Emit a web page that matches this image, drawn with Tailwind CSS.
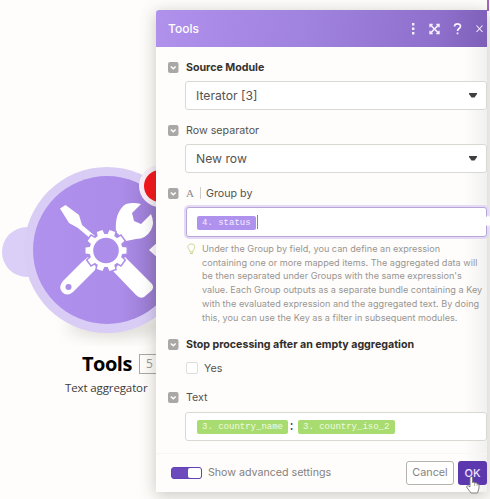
<!DOCTYPE html>
<html lang="en">
<head>
<meta charset="utf-8">
<title>Tools</title>
<script src="https://cdn.jsdelivr.net/npm/@tailwindcss/browser@4"></script>
</head>
<body class="relative w-[490px] h-[499px] overflow-hidden bg-[#fefdfb] font-['Inter','Liberation_Sans',sans-serif] text-[#55534f]">
<svg width="0" height="0" class="absolute">
  <defs>
    <symbol id="chev" viewBox="0 0 11 11"><rect width="10.500" height="11" rx="2" fill="#aaa7a7"/><path d="M2.800 4.500 5.250 6.800 7.700 4.500" fill="none" stroke="#fff" stroke-width="1.500"/></symbol>
  </defs>
</svg>

<!-- module node on the canvas -->
<svg class="absolute left-0 top-0" width="220" height="360" viewBox="0 0 220 360">
  <defs>
    <linearGradient id="node" x1="0" y1="0" x2="1" y2="0"><stop offset="0" stop-color="#b092ee"/><stop offset=".6" stop-color="#ab8de9"/><stop offset=".85" stop-color="#9678cc"/></linearGradient>
    <filter id="soft" x="-50%" y="-50%" width="200%" height="200%"><feGaussianBlur stdDeviation="8"/></filter>
    <path id="tooth" d="M-3-20.500H3L3.700-14H-3.700Z"/>
    <g id="gear">
      <circle r="16.500"/>
      <use href="#tooth" transform="rotate(18)"/><use href="#tooth" transform="rotate(54)"/><use href="#tooth" transform="rotate(90)"/><use href="#tooth" transform="rotate(126)"/><use href="#tooth" transform="rotate(162)"/><use href="#tooth" transform="rotate(198)"/><use href="#tooth" transform="rotate(234)"/><use href="#tooth" transform="rotate(270)"/><use href="#tooth" transform="rotate(306)"/><use href="#tooth" transform="rotate(342)"/>
    </g>
  </defs>
  <ellipse cx="115" cy="326" rx="48" ry="10" fill="#d9d7d3" filter="url(#soft)"/>
  <circle cx="27" cy="252" r="25" fill="#dbcff7"/>
  <circle cx="107" cy="250" r="83" fill="#d9cdf6"/>
  <circle cx="107" cy="250" r="74" fill="url(#node)"/>
  <circle cx="160" cy="186" r="21" fill="#f7effa"/>
  <circle cx="160" cy="186" r="16" fill="#f5161a"/>
  <path d="M149 250 160 240V260Z" fill="#fff"/>
  <g fill="#fff">
    <path d="M60 208.500 65.500 205 79 215 82 225 95 236 91 239 78 228 69 223Z"/>
    <path d="M116 232C115 219 118 209 126 204Q133 202 141 204L132 213 134 221 141 224 151 214Q155 223 151 230 146 239 136 239L126 241Z"/>
    <path d="M82 262 88 257 97 268 73 292Q67 297 62 292 58 287 63 281Z"/>
    <path d="M125 257 152 284Q155 288 150 292L144 297Q140 299 136 295L113 271Z"/>
  </g>
  <use href="#gear" transform="translate(106 250.500)" fill="#ac8ee9" stroke="#ac8ee9" stroke-width="3"/>
  <use href="#gear" transform="translate(106 250.500)" fill="#fff"/>
  <circle cx="106" cy="250.500" r="12.800" fill="#ad8eea"/>
  <circle cx="68.500" cy="287" r="3" fill="#ad8eea"/>
</svg>
<div class="absolute left-[82px] top-[352px] flex items-center gap-[7px] font-['Open_Sans',sans-serif]">
  <span class="text-[20px] leading-6 font-bold text-black tracking-[-0.5px]">Tools</span>
  <span class="h-5 w-10 border border-[#aaa8a5] pl-[6px] text-[12px] leading-[18px] text-[#999]">5</span>
</div>
<div class="absolute left-[65px] top-[379px] whitespace-nowrap font-['Open_Sans',sans-serif] text-[11.500px] leading-[17px] tracking-[-0.12px] text-[#3d3b3b]">Text aggregator</div>
<div class="absolute left-[487px] top-0 h-[11px] w-[2px] bg-[#a765bd]"></div>

<!-- settings panel -->
<section class="absolute left-[156px] top-[10px] flex h-[482px] w-[331px] flex-col rounded-t-[3px] bg-[linear-gradient(90deg,#fefdfc_93%,#f1f1ef)] shadow-[0_3px_16px_1px_rgba(60,60,50,0.26)]">
  <header class="flex h-[37px] shrink-0 items-center rounded-tl-[3px] bg-[linear-gradient(100deg,#b092ed_0%,#a082df_45%,#8e70cc_85%,#7d5fb8_100%)] pl-3 pr-[2px] text-white">
    <span class="flex-1 text-[12px] leading-4 font-medium">Tools</span>
    <svg width="76" height="16" viewBox="0 0 76 16" fill="none" stroke="#f6f0ff">
      <path d="M3 3.200h2.400M3 7.700h2.400M3 12.200h2.400" stroke-width="2.400"/>
      <path d="M21 6.200V3.500H23.700M27.300 3.500H30V6.200M30 9.800V12.500H27.300M23.700 12.500H21V9.800" stroke-width="1.400"/>
      <path d="M21.500 4 29.500 12M29.500 4 21.500 12" stroke-width="1.700"/>
      <path d="M45.500 5.500C45.500 2 51.500 2 51.500 5.300C51.500 7.500 48.500 7.500 48.500 10M48.500 11.500v1.700" stroke-width="1.700"/>
      <path d="M67.500 4.500 73.500 11M73.500 4.500 67.500 11" stroke-width="1.100"/>
    </svg>
  </header>
  <div class="flex flex-col pl-3 text-[10.700px] leading-4">
    <div class="mt-3 flex items-center gap-[7px]"><svg width="11" height="11"><use href="#chev"/></svg><b class="pt-[2px] leading-[14px] font-bold text-[10.650px] text-[#35332f]">Source Module</b></div>
    <div class="mt-[6px] ml-[17px] flex h-[29px] items-center justify-between rounded-[3px] border border-[#d9d9d4] bg-white pl-[10px] pr-[9px] text-[12.200px]"><span>Iterator [3]</span><svg width="8" height="5"><path d="M0 0H8V1L5.500 4.500H2.500L0 1Z" fill="#403e3e"/></svg></div>
    <div class="mt-[12px] flex items-center gap-[7px]"><svg width="11" height="11"><use href="#chev"/></svg><span class="pt-[2px] leading-[14px]">Row separator</span></div>
    <div class="mt-[6px] ml-[17px] flex h-[29px] items-center justify-between rounded-[3px] border border-[#d9d9d4] bg-white pl-[10px] pr-[9px] text-[12.200px]"><span>New row</span><svg width="8" height="5"><path d="M0 0H8V1L5.500 4.500H2.500L0 1Z" fill="#403e3e"/></svg></div>
    <div class="mt-[12px] flex items-center"><svg width="11" height="11"><use href="#chev"/></svg><span class="ml-[7px] w-[14px] font-['Liberation_Serif',serif] text-[11px] text-[#8d8a87]">A</span><i class="h-3 w-px bg-[#cfcdca]"></i><span class="ml-[5px] pt-[2px] leading-[14px]">Group by</span></div>
    <div class="mt-[6px] ml-[18px] flex h-[30px] items-center rounded-[3px] border border-[#b7a7d8] bg-white pl-[10px] shadow-[0_0_0_2px_#e4daf3]"><span class="mt-[2px] flex h-[14px] w-[59px] items-center rounded-[2px] bg-[#af92ee] pl-[5px] font-['Liberation_Mono',monospace] text-[9px] leading-3 text-[#f5edff]">4. status</span><i class="ml-[1px] h-[14px] w-px bg-[#888]"></i></div>
    <div class="mt-[5px] flex pl-[19px]">
      <svg class="mt-[1px] shrink-0" width="9" height="12" fill="none" stroke="#cbd58f"><path d="M3 9V7.500C-.5 5 .5 1 4.500 1S8.500 5 6 7.500V9ZM3 10.500H6"/></svg>
      <p class="ml-[6px] whitespace-nowrap text-[9.130px] leading-[13.700px] text-[#999590]">Under the Group by field, you can define an expression<br>containing one or more mapped items. The aggregated data will<br>be then separated under Groups with the same expression's<br>value. Each Group outputs as a separate bundle containing a Key<br>with the evaluated expression and the aggregated text. By doing<br>this, you can use the Key as a filter in subsequent modules.</p>
    </div>
    <div class="mt-[12px] flex items-center gap-[7px]"><svg width="11" height="11"><use href="#chev"/></svg><b class="pt-[2px] leading-[14px] font-bold text-[10.650px] text-[#302e2b]">Stop processing after an empty aggregation</b></div>
    <div class="mt-[8px] ml-[18px] flex items-center gap-[6px]"><i class="size-3 rounded-[2px] border border-[#dededa] bg-white"></i><span class="pt-[2px] leading-[14px]">Yes</span></div>
    <div class="mt-[13px] flex items-center gap-[7px]"><svg width="11" height="11"><use href="#chev"/></svg><span class="pt-[2px] leading-[14px]">Text</span></div>
    <div class="mt-[7px] ml-[17px] flex h-[29px] items-center rounded-[3px] border border-[#d9d9d4] bg-white pl-[11px] font-['Liberation_Mono',monospace] text-[9px] leading-3 text-[#effbe0]"><span class="flex h-[14px] w-[91px] items-center rounded-[2px] bg-[#a8dc71] pl-[5px]">3. country_name</span><span class="w-[10px] pr-[3px] text-center text-[12px] text-[#444]">:</span><span class="flex h-[14px] w-[97px] items-center rounded-[2px] bg-[#a8dc71] pl-[5px]">3. country_iso_2</span></div>
  </div>
  <footer class="mt-auto flex h-[39px] items-center border-t border-[#fbf5f3] pl-[15px] text-[10.650px]">
    <span class="flex h-3 w-[31px] rounded-[3px] border border-[#6340b3] bg-[#6c49bd]"><i class="ml-auto h-[10px] w-[13px] rounded-[2px] bg-white"></i></span>
    <span class="ml-[6px] text-[#84817d]">Show advanced settings</span>
    <button class="ml-auto h-6 w-12 rounded-[3px] border border-[#b5b3af] bg-white text-[10.800px] text-[#85827e]">Cancel</button>
    <button class="ml-1 h-6 w-[29px] rounded-[3px] bg-[#5c38ae] text-[11px] font-medium text-[#ede4ff]">OK</button>
  </footer>
</section>
<div class="absolute left-[484px] top-[217px] size-2 rotate-45 bg-white"></div>
<svg class="absolute left-[465px] top-[475px]" width="15" height="19" viewBox="0 0 15 19"><path d="M5 11V2.500Q6.300.5 7.500 2.500V7.500L9 7 10 8 11.500 7.700 12.300 9 14 9.300V13L12.500 18H6L1.500 12Q2 9.500 5 12Z" fill="#fff" stroke="#777" stroke-width=".9"/><path d="M9.500 8v3M12 9v2" stroke="#999" stroke-width=".7"/></svg>
</body>
</html>
